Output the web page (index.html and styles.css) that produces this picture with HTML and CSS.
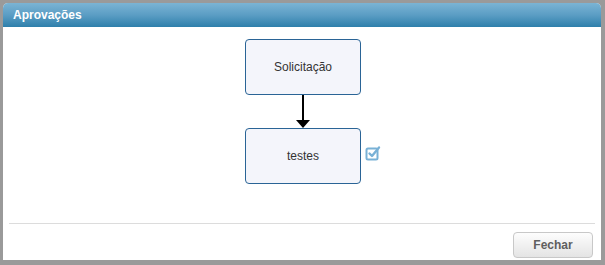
FILE: index.html
```html
<!DOCTYPE html>
<html lang="pt">
<head>
    <meta charset="UTF-8">
    <title>Aprovações</title>
    <link rel="stylesheet" href="styles.css">
</head>
<body>
    <div class="dialog">
        <div class="dialog-header">Aprovações</div>

        <div class="dialog-body">
            <div class="flow">
                <div class="step">Solicitação</div>
                <div class="connector">
                    <span class="line"></span>
                    <span class="head"></span>
                </div>
                <div class="step-row">
                    <div class="step">testes</div>
                    <svg class="check" width="16" height="16" viewBox="0 0 16 16">
                        <rect x="1.5" y="3.5" width="11" height="11" rx="1.5" fill="none" stroke="#79b1d6" stroke-width="2"/>
                        <path d="M4.5 8.5 L7 11 L14 2.5" fill="none" stroke="#79b1d6" stroke-width="2.4" stroke-linecap="round" stroke-linejoin="round"/>
                    </svg>
                </div>
            </div>
        </div>

        <div class="dialog-footer">
            <button class="btn">Fechar</button>
        </div>
    </div>
</body>
</html>
```

FILE: styles.css
```css
html, body {
    margin: 0;
    padding: 0;
}
body {
    width: 605px;
    height: 265px;
    background-color: #9a9a9a;
    font-family: Arial, "Liberation Sans", sans-serif;
    color: #333;
}
.dialog {
    box-sizing: border-box;
    margin: 3px 4px 0 3px;
    height: 257px;
    background-color: white;
    border-radius: 5px 5px 0 0;
    display: flex;
    flex-direction: column;
}
.dialog-header {
    height: 24px;
    line-height: 24px;
    padding-left: 10px;
    color: white;
    font-size: 12px;
    font-weight: bold;
    border-radius: 5px 5px 0 0;
    background: linear-gradient(to bottom, #7bb4d4, #5b9dc4 50%, #2e7fab);
}
.dialog-body {
    flex: 1;
    border-bottom: 1px solid #dcdcdc;
    margin: 0 6px;
}
.flow {
    display: flex;
    flex-direction: column;
    align-items: center;
    padding-top: 12px;
    margin-left: 2px;
}
.step {
    box-sizing: border-box;
    width: 116px;
    height: 56px;
    border: 1px solid #2a6496;
    border-radius: 4px;
    background-color: #f4f5fb;
    display: flex;
    align-items: center;
    justify-content: center;
    font-size: 12px;
    color: #333;
}
.connector {
    height: 33px;
    display: flex;
    flex-direction: column;
    align-items: center;
}
.line {
    width: 2px;
    flex: 1;
    background-color: black;
}
.head {
    width: 0;
    height: 0;
    border-left: 7px solid transparent;
    border-right: 7px solid transparent;
    border-top: 8px solid black;
}
.step-row {
    display: flex;
    align-items: center;
    gap: 4px;
    margin-right: -20px;
}
.check {
    margin-bottom: 7px;
}
.dialog-footer {
    display: flex;
    justify-content: flex-end;
    padding: 8px 8px 0 0;
    height: 36px;
    box-sizing: border-box;
}
.btn {
    width: 80px;
    height: 26px;
    border: 1px solid #c8c8c8;
    border-radius: 4px;
    background: linear-gradient(to bottom, #fdfdfd, #e4e4e4);
    font-family: Arial, "Liberation Sans", sans-serif;
    font-size: 12px;
    font-weight: bold;
    color: #5f5f5f;
}
```
